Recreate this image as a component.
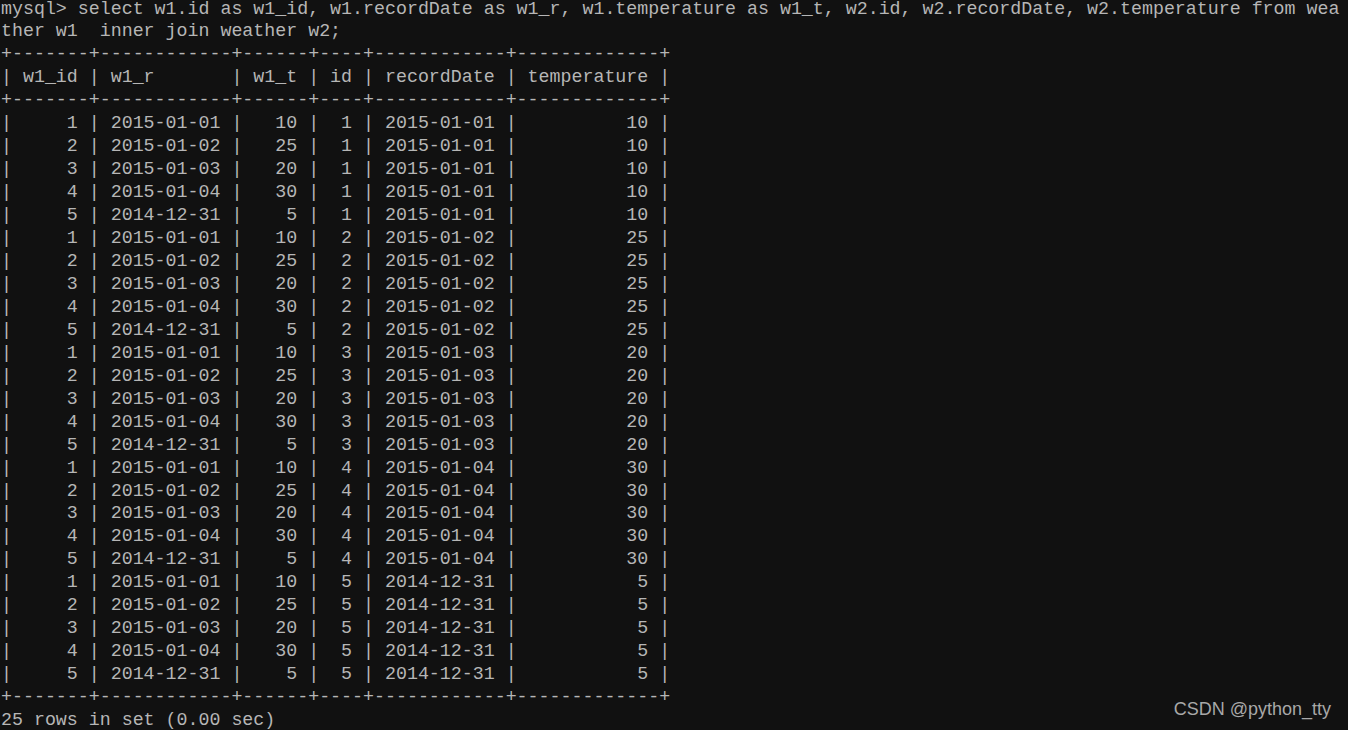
type Row = [number, string, number];

const weather: Row[] = [
  [1, "2015-01-01", 10],
  [2, "2015-01-02", 25],
  [3, "2015-01-03", 20],
  [4, "2015-01-04", 30],
  [5, "2014-12-31", 5],
];

const border = "+-------+------------+------+----+------------+-------------+";

function rowLine(a: Row, b: Row) {
  return (
    "| " +
    String(a[0]).padStart(5) +
    " | " +
    a[1].padEnd(10) +
    " | " +
    String(a[2]).padStart(4) +
    " | " +
    String(b[0]).padStart(2) +
    " | " +
    b[1].padEnd(10) +
    " | " +
    String(b[2]).padStart(11) +
    " |"
  );
}

export default function App() {
  const lines: string[] = [
    "mysql> select w1.id as w1_id, w1.recordDate as w1_r, w1.temperature as w1_t, w2.id, w2.recordDate, w2.temperature from wea",
    "ther w1  inner join weather w2;",
    border,
    "| w1_id | w1_r       | w1_t | id | recordDate | temperature |",
    border,
  ];
  // w2 outer, w1 inner — same order mysql printed
  weather.forEach((b) => {
    weather.forEach((a) => {
      lines.push(rowLine(a, b));
    });
  });
  lines.push(border);
  lines.push("25 rows in set (0.00 sec)");

  return (
    <div className="relative w-[1348px] h-[730px] overflow-hidden bg-[#111111]">
      <pre className="mt-[-2.5px] pl-[1px] text-[18.3px] leading-[22.96px] text-[#b6b6b6] whitespace-pre font-['Liberation_Mono',monospace]">
        {lines.map((l, i) => (
          <div key={i}>{l}</div>
        ))}
      </pre>
      <div className="absolute right-[17px] bottom-[7px] text-[18px] text-[#a8a8a8] font-['Liberation_Sans',Arial,sans-serif]">
        CSDN @python_tty
      </div>
    </div>
  );
}
